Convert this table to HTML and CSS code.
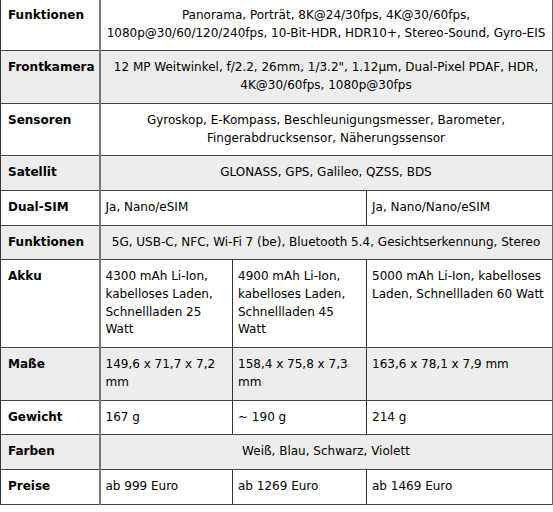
FILE: index.html
```html
<!DOCTYPE html>
<html lang="de">
<head>
<meta charset="utf-8">
<title>Technische Daten</title>
<link rel="stylesheet" href="styles.css">
</head>
<body>
<table class="specs">
  <colgroup>
    <col class="c-label">
    <col class="c-a">
    <col class="c-b">
    <col class="c-c">
  </colgroup>
  <tbody>
    <tr>
      <th>Funktionen</th>
      <td colspan="3" class="center">Panorama, Porträt, 8K@24/30fps, 4K@30/60fps, 1080p@30/60/120/240fps, 10-Bit-HDR, HDR10+, Stereo-Sound, Gyro-EIS</td>
    </tr>
    <tr class="alt">
      <th>Frontkamera</th>
      <td colspan="3" class="center">12 MP Weitwinkel, f/2.2, 26mm, 1/3.2", 1.12µm, Dual-Pixel PDAF, HDR, 4K@30/60fps, 1080p@30fps</td>
    </tr>
    <tr>
      <th>Sensoren</th>
      <td colspan="3" class="center">Gyroskop, E-Kompass, Beschleunigungsmesser, Barometer, Fingerabdrucksensor, Näherungssensor</td>
    </tr>
    <tr class="alt">
      <th>Satellit</th>
      <td colspan="3" class="center">GLONASS, GPS, Galileo, QZSS, BDS</td>
    </tr>
    <tr>
      <th>Dual-SIM</th>
      <td colspan="2">Ja, Nano/eSIM</td>
      <td>Ja, Nano/Nano/eSIM</td>
    </tr>
    <tr class="alt">
      <th>Funktionen</th>
      <td colspan="3" class="center">5G, USB-C, NFC, Wi-Fi 7 (be), Bluetooth 5.4, Gesichtserkennung, Stereo</td>
    </tr>
    <tr>
      <th>Akku</th>
      <td>4300 mAh Li-Ion, kabelloses Laden, Schnellladen 25 Watt</td>
      <td>4900 mAh Li-Ion, kabelloses Laden, Schnellladen 45 Watt</td>
      <td>5000 mAh Li-Ion, kabelloses Laden, Schnellladen 60 Watt</td>
    </tr>
    <tr class="alt">
      <th>Maße</th>
      <td>149,6 x 71,7 x 7,2 mm</td>
      <td>158,4 x 75,8 x 7,3 mm</td>
      <td>163,6 x 78,1 x 7,9 mm</td>
    </tr>
    <tr>
      <th>Gewicht</th>
      <td>167 g</td>
      <td>~ 190 g</td>
      <td>214 g</td>
    </tr>
    <tr class="alt">
      <th>Farben</th>
      <td colspan="3" class="center">Weiß, Blau, Schwarz, Violett</td>
    </tr>
    <tr>
      <th>Preise</th>
      <td>ab 999 Euro</td>
      <td>ab 1269 Euro</td>
      <td>ab 1469 Euro</td>
    </tr>
  </tbody>
</table>
</body>
</html>
```
FILE: styles.css
```css
html, body {
  margin: 0;
  padding: 0;
  background: #ffffff;
}

body {
  font-family: "DejaVu Sans", Verdana, sans-serif;
  font-size: 12px;
  color: #000000;
}

.specs {
  margin-top: -2px;
  width: 552px;
  table-layout: fixed;
  border-collapse: collapse;
  border-left: 1px solid #333333;
  border-right: 2px solid #666666;
  border-bottom: 1px solid #222222;
}

.c-label { width: 99px; }
.c-a { width: 133px; }
.c-b { width: 134px; }
.c-c { width: 186px; }

.specs th,
.specs td {
  border-top: 1px solid #444444;
  border-bottom: 1px solid #444444;
  padding: 8px 5px;
  line-height: 17.7px;
  vertical-align: top;
  text-align: left;
}

.specs td {
  border-left: 1px solid #333333;
  font-weight: normal;
}

.specs th {
  font-weight: bold;
  padding-left: 7px;
  border-right: 2px solid #777777;
}

.specs th + td {
  border-left: 2px solid #777777;
}

.specs .center {
  text-align: center;
}

.specs tr.alt th,
.specs tr.alt td {
  background: #ececec;
}
```
